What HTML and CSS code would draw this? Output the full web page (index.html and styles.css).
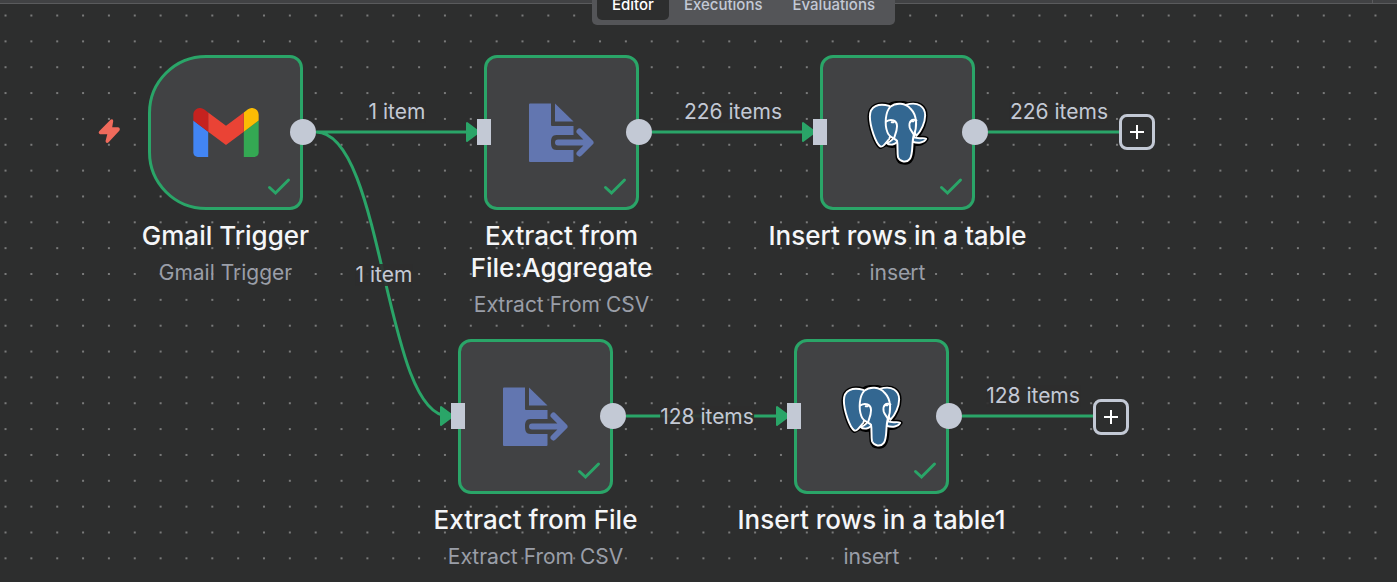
FILE: index.html
```html
<!DOCTYPE html>
<html lang="en">
<head>
<meta charset="utf-8">
<title>Workflow editor</title>
<link rel="stylesheet" href="styles.css">
</head>
<body>
<svg class="sprites" aria-hidden="true">
  <symbol id="gmail" viewBox="52 42 88 66">
    <path fill="#4285f4" d="M58 108h14V74L52 59v43c0 3.320 2.690 6 6 6"/>
    <path fill="#34a853" d="M120 108h14c3.320 0 6-2.690 6-6V59l-20 15"/>
    <path fill="#fbbc04" d="M120 48v26l20-15v-8c0-7.420-8.470-11.650-14.400-7.200"/>
    <path fill="#ea4335" d="M72 74V48l24 18 24-18v26L96 92"/>
    <path fill="#c5221f" d="M52 51v8l20 15V48l-5.600-4.200c-5.940-4.450-14.400-.220-14.400 7.200"/>
  </symbol>
  <symbol id="file-export" viewBox="0 0 66 60">
    <g fill="#6276b0">
      <path d="M1 .5H22V22q0 1 1 1H44.500V32H27.500C23 32 22 35 22 39.500S23 47 27.500 47H44.500V58q0 1-1 1H1Q0 59 0 58V1.500Q0 .5 1 .5Z"/>
      <path d="M26 .5 44.500 18.500H26Z"/>
    </g>
    <g fill="none" stroke="#6276b0" stroke-width="6" stroke-linecap="round" stroke-linejoin="round">
      <path d="M29 39.500H58M50.500 28.500 61.500 39.500 50.500 50.500"/>
    </g>
  </symbol>
  <symbol id="postgres" viewBox="0 0 64 66">
    <g stroke-linejoin="round" stroke-linecap="round">
      <g fill="#000" stroke="#000" stroke-width="5">
        <path d="M14 47C9 44 3 26 3 16 3 5 12 2 23 5 27 2 37 1 42 4 53 1 60 6 60 15 60 22 56 31 51 37 55 39 59 38 61 39 59 43 54 45 48 43 47 48 48 56 45 60 42 65 33 64 32 58L31 44C28 47 23 46 20 44Z"/>
      </g>
      <g fill="#336791" stroke="#fff" stroke-width="2">
        <path d="M23 5C12 2 3 5 3 16 3 26 9 44 14 47 17 48 19 43 23 39L30 20Z"/>
        <path d="M40 4C53 0 60 6 60 15 60 22 56 31 51 36L43 20Z"/>
        <path d="M20 43C23 46 30 46 32 40L28 37C26 41 22 43 20 43Z"/>
        <path d="M48 37C53 40 58 37 61 39 59 43 53 44 47 42Z"/>
        <path d="M21 32C18 24 19 11 24 6 30 1 40 2 45 8 52 15 52 27 48 36 46 43 48 55 44 60 41 64 34 63 32 58 31 53 32 46 31 41 28 38 23 38 21 32Z"/>
        <path fill="none" d="M20 21C25 18 31 20 31 26 31 31 29 35 28 38M51 20C46 18 43 21 44 27 45 31 48 33 49 36"/>
      </g>
      <path fill="none" stroke="#fff" stroke-width="2" d="M25.500 22H27.500M46 21H48"/>
    </g>
  </symbol>
  <symbol id="check" viewBox="0 0 24 20">
    <path fill="none" stroke="#2aa568" stroke-width="3" stroke-linecap="round" stroke-linejoin="miter" d="M2.500 10.500 8.500 16 21.500 3"/>
  </symbol>
</svg>

<header class="topbar">
  <nav class="tabs" aria-label="Workflow views">
    <button class="tab active" type="button">Editor</button>
    <button class="tab" type="button">Executions</button>
    <button class="tab" type="button">Evaluations</button>
  </nav>
  <span class="topbar-divider"></span>
</header>

<main class="canvas">
  <svg class="layer" aria-hidden="true">
    <defs>
      <pattern id="grid" width="16" height="16" patternUnits="userSpaceOnUse" patternTransform="translate(-7.400 2.600) scale(1.6155)">
        <circle cx="8" cy="8" r=".65" fill="#8c8d8d"/>
      </pattern>
    </defs>
    <rect width="100%" height="100%" fill="url(#grid)"/>
  </svg>
  <svg class="layer edges" aria-hidden="true">
    <path d="M316 132H470M316 132C384 132 384 416 448 416M652 132H806M626 416H780M988 132H1119M962 416H1093"/>
    <g class="arrows">
      <path d="M467 123V141L479 132Z"/>
      <path d="M803 123V141L815 132Z"/>
      <path d="M441 407V425L453 416Z"/>
      <path d="M777 407V425L789 416Z"/>
    </g>
  </svg>

  <span class="edge-label e1">1 item</span>
  <span class="edge-label e2">1 item</span>
  <span class="edge-label e3">226 items</span>
  <span class="edge-label e4">226 items</span>
  <span class="edge-label e5">128 items</span>
  <span class="edge-label e6">128 items</span>

  <svg class="bolt" viewBox="0 0 23 25" aria-hidden="true"><path fill="#f06a5b" d="M12.500.8 1.200 12.200C.2 13.600.8 15.200 2.300 15.200H9.300L7.600 21.800C7.400 24 9.400 24.600 10.600 23.200L21.300 11.800C22.400 10.200 21.600 8.200 20 8.200H14.200L15.200 2.200C15.300.3 13.600-.3 12.500.8Z"/></svg>

  <article class="node trigger n1">
    <div class="box"><svg class="icon gmail"><use href="#gmail"/></svg><svg class="check"><use href="#check"/></svg><i class="out"></i></div>
    <h2>Gmail Trigger</h2>
    <p>Gmail Trigger</p>
  </article>
  <article class="node n2">
    <div class="box"><svg class="icon"><use href="#file-export"/></svg><svg class="check"><use href="#check"/></svg><i class="in"></i><i class="out"></i></div>
    <h2>Extract from<br>File:Aggregate</h2>
    <p>Extract From CSV</p>
  </article>
  <article class="node n3">
    <div class="box"><svg class="icon"><use href="#postgres"/></svg><svg class="check"><use href="#check"/></svg><i class="in"></i><i class="out"></i></div>
    <h2>Insert rows in a table</h2>
    <p>insert</p>
  </article>
  <article class="node n4">
    <div class="box"><svg class="icon"><use href="#file-export"/></svg><svg class="check"><use href="#check"/></svg><i class="in"></i><i class="out"></i></div>
    <h2>Extract from File</h2>
    <p>Extract From CSV</p>
  </article>
  <article class="node n5">
    <div class="box"><svg class="icon"><use href="#postgres"/></svg><svg class="check"><use href="#check"/></svg><i class="in"></i><i class="out"></i></div>
    <h2>Insert rows in a table1</h2>
    <p>insert</p>
  </article>

  <button class="plus p1" type="button" aria-label="Add node after Insert rows in a table"><svg viewBox="0 0 16 16"><path d="M8 1V15M1 8H15"/></svg></button>
  <button class="plus p2" type="button" aria-label="Add node after Insert rows in a table1"><svg viewBox="0 0 16 16"><path d="M8 1V15M1 8H15"/></svg></button>
</main>
</body>
</html>
```

FILE: styles.css
```css
* { box-sizing: border-box; }

body {
  margin: 0;
  height: 100vh;
  overflow: hidden;
  background: #2d2e2e;
  font-family: Inter, "Liberation Sans", sans-serif;
}

.sprites { position: absolute; width: 0; height: 0; }

.topbar {
  position: absolute;
  z-index: 3;
  top: 0;
  left: 0;
  right: 0;
  height: 4px;
  display: flex;
  justify-content: center;
  align-items: flex-end;
  background: #414244;
  border-bottom: 1px solid #5a5b5d;
}

.tabs {
  display: flex;
  margin: 0 0 -22px 90px;
  padding: 5px;
  border-radius: 5px;
  background: #545558;
}

.tab {
  height: 30px;
  padding: 0 15px;
  border: 0;
  border-radius: 5px;
  background: none;
  color: #c3c9d5;
  font: 500 15px/30px Inter, sans-serif;
}

.tab.active { background: #2d2e2e; color: #fff; }

.topbar-divider {
  position: absolute;
  right: 24px;
  top: 0;
  width: 1px;
  height: 3px;
  background: #5a5b5d;
}

.canvas { position: relative; height: 100%; }

.layer { position: absolute; inset: 0; width: 100%; height: 100%; }
.edges { fill: none; stroke: #2aa568; stroke-width: 3; }
.arrows { fill: #2aa568; stroke-width: 2; stroke-linejoin: round; }

.edge-label {
  position: absolute;
  transform: translate(-50%, -50%);
  color: #c3c9d5;
  background: #2d2e2ee6;
  font-size: 21px;
  line-height: 22px;
  white-space: nowrap;
}
.e1 { left: 397px; top: 112px; }
.e2 { left: 384px; top: 275px; }
.e3 { left: 733px; top: 112px; }
.e4 { left: 1059px; top: 112px; }
.e5 { left: 707px; top: 417px; }
.e6 { left: 1033px; top: 396px; }

.bolt { position: absolute; left: 98px; top: 119px; width: 23px; height: 25px; }

.node { position: absolute; width: 155px; }
.n1 { left: 148px; top: 55px; }
.n2 { left: 484px; top: 55px; }
.n3 { left: 820px; top: 55px; }
.n4 { left: 458px; top: 339px; }
.n5 { left: 794px; top: 339px; }

.box {
  position: relative;
  height: 155px;
  display: grid;
  place-items: center;
  background: #414244;
  border: 3px solid #2aa568;
  border-radius: 13px;
}
.trigger .box { border-radius: 58px 13px 13px 58px; }

.icon { width: 66px; height: 64px; }
.icon.gmail { height: 49px; }

.check { position: absolute; right: 9px; bottom: 10px; width: 24px; height: 20px; }

.in, .out { position: absolute; top: 61px; height: 26px; background: #c3c9d5; }
.in { left: -10px; width: 14px; }
.out { right: -16px; width: 26px; border-radius: 50%; }

.node h2, .node p {
  width: max-content;
  margin: 0;
  position: relative;
  left: 50%;
  transform: translateX(-50%);
  text-align: center;
}
.node h2 {
  margin-top: 10px;
  color: #f5f6f8;
  font-size: 26px;
  font-weight: 500;
  line-height: 32px;
}
.node p { margin-top: 7px; color: #9a9ea8; font-size: 21px; line-height: 28px; }

.plus {
  position: absolute;
  width: 36px;
  height: 36px;
  padding: 0;
  display: grid;
  place-items: center;
  background: #2d2e2e;
  border: 3px solid #c3c9d5;
  border-radius: 8px;
}
.plus svg { width: 16px; height: 16px; stroke: #fff; stroke-width: 2; }
.p1 { left: 1119px; top: 114px; }
.p2 { left: 1093px; top: 399px; }
```
